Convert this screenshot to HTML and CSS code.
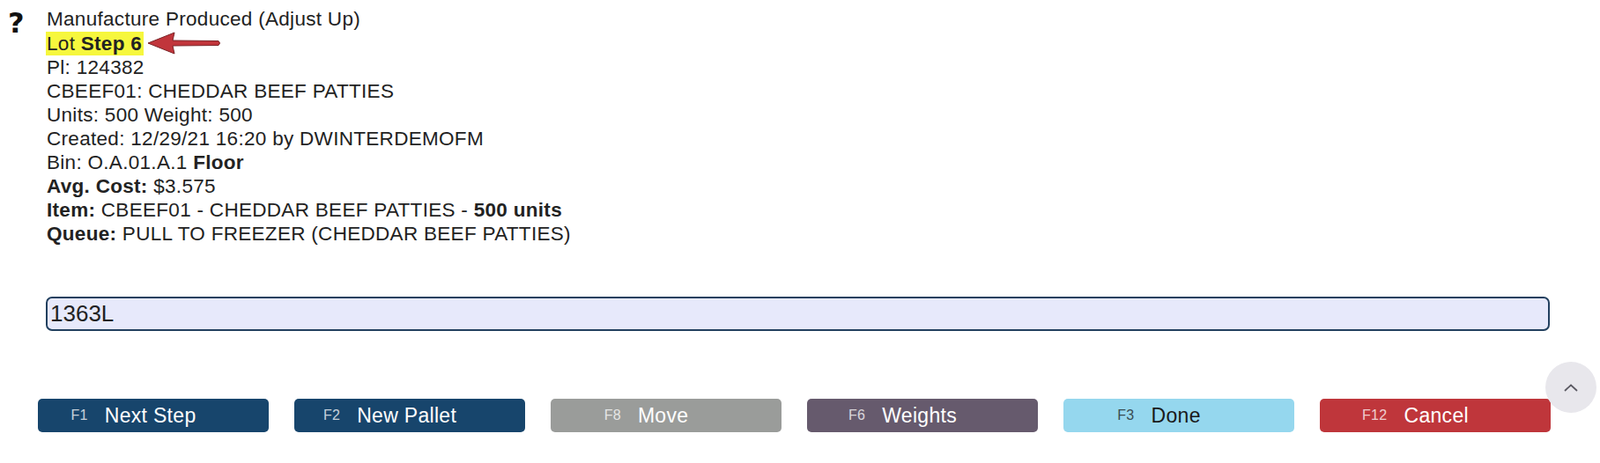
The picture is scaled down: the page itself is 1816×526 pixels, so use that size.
FILE: index.html
```html
<!doctype html>
<html><head>
	<title>Manufacture Produced</title>
	<meta http-equiv="Content-Type" content="text/html; charset=utf-8">
<link rel="stylesheet" href="styles.css">
</head><body>
	<div class="task">
		<div class="help">?</div>
		<div class="info">
			<div>Manufacture Produced (Adjust Up)</div>
			<div class="stepline"><span class="hl">Lot <b>Step 6</b></span><svg class="arrow" width="86" height="28" viewBox="0 0 86 28"><path d="M2 14 L32 2 L30 11 L82 11.5 Q85 14 82 16.5 L30 17 L32 26 Z" fill="#c1353b" stroke="#7a2226" stroke-width="1"/></svg></div>
			<div>Pl: 124382</div>
			<div>CBEEF01: CHEDDAR BEEF PATTIES</div>
			<div>Units: 500 Weight: 500</div>
			<div>Created: 12/29/21 16:20 by DWINTERDEMOFM</div>
			<div>Bin: O.A.01.A.1 <b>Floor</b></div>
			<div><b>Avg. Cost:</b> $3.575</div>
			<div><b>Item:</b> CBEEF01 - CHEDDAR BEEF PATTIES - <b>500 units</b></div>
			<div><b>Queue:</b> PULL TO FREEZER (CHEDDAR BEEF PATTIES)</div>
		</div>
	</div>
	<div class="scan">
		<input type="text" id="scan" value="1363L" autofocus>
	</div>
	<div class="keys">
		<button class="key navy"><small>F1</small>Next Step</button>
		<button class="key navy"><small>F2</small>New Pallet</button>
		<button class="key gray"><small>F8</small>Move</button>
		<button class="key plum"><small>F6</small>Weights</button>
		<button class="key sky"><small>F3</small>Done</button>
		<button class="key red"><small>F12</small>Cancel</button>
	</div>
	<a class="totop" href="#"><svg width="20" height="12" viewBox="0 0 20 12"><path d="M3 10 L10 3.5 L17 10" fill="none" stroke="#5a5962" stroke-width="1.8"/></svg></a>
</body></html>
```

FILE: styles.css
```css
body {
	margin: 8px;
	background: white;
	color: #222;
	font: 22.5px/27px 'Liberation Sans', Arial, sans-serif;
	letter-spacing: 0.3px;
}

.task {
	display: flex;
}

.help {
	width: 45px;
	flex: none;
	padding-left: 1px;
	box-sizing: border-box;
	font: bold 32px/36px 'DejaVu Sans', sans-serif;
	color: #111;
}

.info b {
	font-weight: bold;
}

.stepline {
	display: flex;
	align-items: center;
}

.hl {
	background: #f6f73d;
	padding: 0 2px 0 1px;
	margin-left: -1px;
}

.arrow {
	margin-left: 3px;
}

.scan {
	margin: 58px 49px 0 44px;
}

.scan input {
	display: block;
	width: 100%;
	box-sizing: border-box;
	height: 39px;
	padding: 0 3px;
	font: 26px 'Liberation Sans', Arial, sans-serif;
	color: #222;
	background: #e7e9fb;
	border: 2px solid #22405f;
	border-radius: 7px;
	outline: none;
}

.keys {
	display: flex;
	gap: 29px;
	margin: 77px 0 0 35px;
}

.key {
	width: 262px;
	height: 38px;
	border: none;
	border-radius: 5px;
	color: white;
	font: 23px 'Liberation Sans', Arial, sans-serif;
	letter-spacing: 0.3px;
	display: flex;
	align-items: center;
	justify-content: center;
	padding: 0 45px 0 0;
}

.key small {
	font-size: 16px;
	margin-right: 19px;
	opacity: 0.75;
}

.navy { background: #17456c; }
.gray { background: #9a9c9a; }
.plum { background: #665a6d; }
.sky { background: #95d7ee; color: #1a1a1a; }
.red { background: #bf363b; }

.totop {
	position: absolute;
	left: 1754px;
	top: 411px;
	width: 58px;
	height: 58px;
	border-radius: 50%;
	background: #e8e7ec;
	display: flex;
	align-items: center;
	justify-content: center;
}
```
